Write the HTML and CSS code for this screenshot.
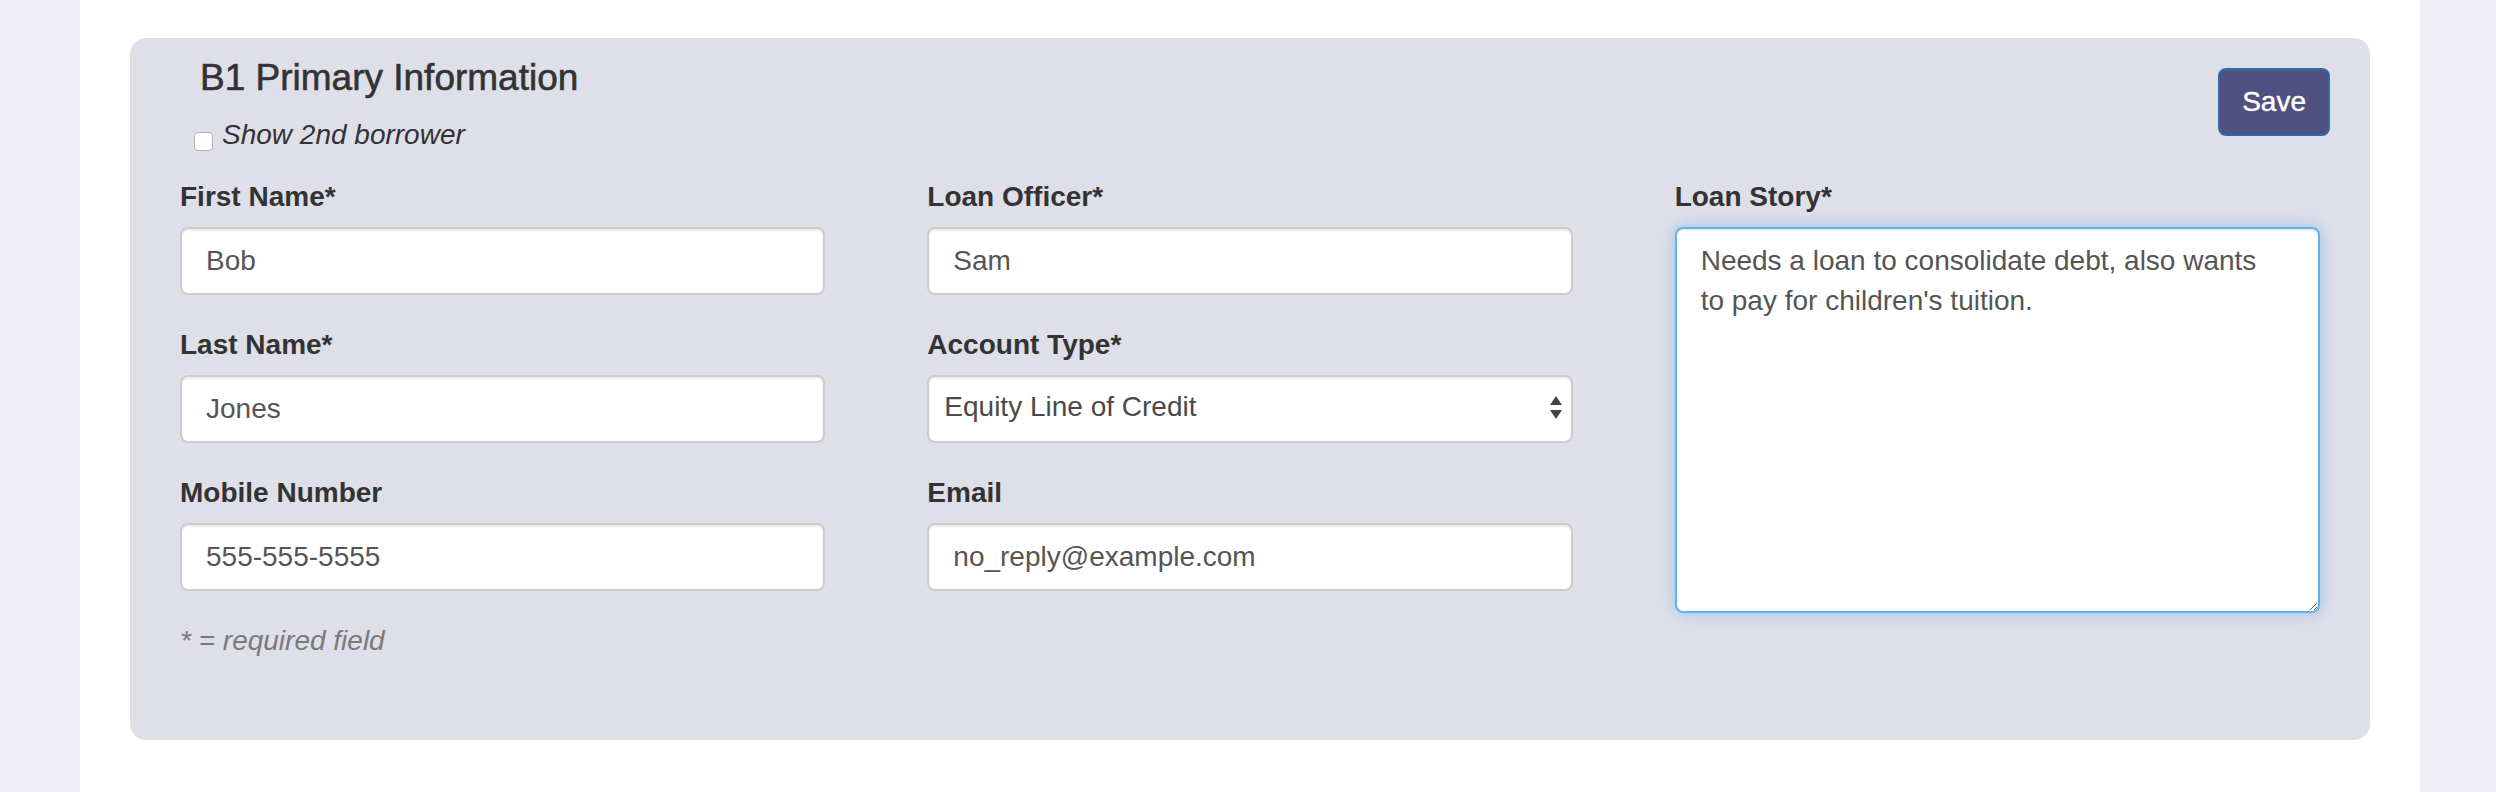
FILE: index.html
```html
<!DOCTYPE html>
<html lang="en">
<head>
<meta charset="utf-8">
<title>B1 Primary Information</title>
<link rel="stylesheet" href="styles.css">
</head>
<body>
<div class="page">
  <section class="card">
    <div class="card-header">
      <div class="heading">
        <h3 class="title">B1 Primary Information</h3>
        <label class="check-row">
          <input type="checkbox" class="check">
          <span class="check-label">Show 2nd borrower</span>
        </label>
      </div>
      <button class="btn-save" type="button">Save</button>
    </div>
    <div class="form-grid">
      <div class="col">
        <div class="group">
          <label class="field-label">First Name*</label>
          <input class="field" type="text" value="Bob">
        </div>
        <div class="group">
          <label class="field-label">Last Name*</label>
          <input class="field" type="text" value="Jones">
        </div>
        <div class="group">
          <label class="field-label">Mobile Number</label>
          <input class="field" type="text" value="555-555-5555">
        </div>
        <p class="note">* = required field</p>
      </div>
      <div class="col">
        <div class="group">
          <label class="field-label">Loan Officer*</label>
          <input class="field" type="text" value="Sam">
        </div>
        <div class="group">
          <label class="field-label">Account Type*</label>
          <div class="select-wrap">
            <select class="field select">
              <option>Equity Line of Credit</option>
            </select>
            <svg class="select-arrows" width="14" height="24" viewBox="0 0 14 24" aria-hidden="true">
              <path d="M7 0 L13 9 L1 9 Z" fill="#444"/>
              <path d="M1 14 L13 14 L7 23 Z" fill="#444"/>
            </svg>
          </div>
        </div>
        <div class="group">
          <label class="field-label">Email</label>
          <input class="field" type="text" value="no_reply@example.com">
        </div>
      </div>
      <div class="col">
        <div class="group">
          <label class="field-label">Loan Story*</label>
          <textarea class="field story">Needs a loan to consolidate debt, also wants
to pay for children's tuition.</textarea>
        </div>
      </div>
    </div>
  </section>
</div>
</body>
</html>
```

FILE: styles.css
```css
html, body {
  margin: 0;
  padding: 0;
}

body {
  background: #efeff5;
  font-family: "Liberation Sans", Arial, Helvetica, sans-serif;
  color: #333;
}

.page {
  margin: 0 76px 0 80px;
  background: #ffffff;
  min-height: 792px;
  padding: 38px 50px 0;
  box-sizing: border-box;
}

.card {
  background: #dfdfe9;
  border-radius: 16px;
  padding: 20px 0 79px;
}

.card-header {
  display: flex;
  justify-content: space-between;
  align-items: flex-start;
  padding: 0 40px 0 64px;
}

.heading {
  display: flex;
  flex-direction: column;
}

.title {
  margin: 0 0 0 6px;
  font-size: 37px;
  font-weight: 400;
  line-height: 40px;
  color: #333;
  -webkit-text-stroke: 0.6px #333;
}

.check-row {
  display: flex;
  align-items: flex-start;
  margin-top: 17px;
  height: 40px;
}

.check {
  appearance: none;
  -webkit-appearance: none;
  width: 19px;
  height: 19px;
  margin: 17px 9px 0 0;
  border: 1px solid #b4b4b8;
  border-radius: 4px;
  background: #ffffff;
  box-sizing: border-box;
}

.check-label {
  font-size: 28px;
  font-style: italic;
  line-height: 40px;
  color: #333;
}

.btn-save {
  margin-top: 10px;
  height: 68px;
  padding: 0 22px;
  background: #4f5180;
  border: 2px solid #2e6da4;
  border-radius: 8px;
  color: #ffffff;
  font-family: "Liberation Sans", Arial, sans-serif;
  font-size: 28px;
  line-height: 40px;
  -webkit-text-stroke: 0.4px #ffffff;
}

.form-grid {
  display: grid;
  grid-template-columns: repeat(3, 1fr);
  column-gap: 102px;
  padding: 0 50px;
  margin-top: 22px;
}

.col {
  display: flex;
  flex-direction: column;
  min-width: 0;
}

.group {
  display: flex;
  flex-direction: column;
  margin-bottom: 30px;
}

.field-label {
  font-size: 28px;
  font-weight: 700;
  line-height: 40px;
  margin-bottom: 10px;
  color: #333;
}

.field {
  display: block;
  width: 100%;
  height: 68px;
  box-sizing: border-box;
  padding: 12px 24px;
  border: 2px solid #cccccc;
  border-radius: 8px;
  background: #ffffff;
  box-shadow: inset 0 2px 2px rgba(0, 0, 0, 0.075);
  font-family: "Liberation Sans", Arial, sans-serif;
  font-size: 28px;
  line-height: 40px;
  color: #555;
  margin: 0;
  outline: none;
}

.select-wrap {
  position: relative;
}

.select {
  appearance: none;
  -webkit-appearance: none;
  padding: 10px 40px 14px 15px;
  color: #4a4a4a;
}

.select-arrows {
  position: absolute;
  right: 10px;
  top: 21px;
  pointer-events: none;
}

.story {
  height: 386px;
  border-color: #66afe9;
  box-shadow: inset 0 2px 2px rgba(0, 0, 0, 0.075), 0 0 16px rgba(102, 175, 233, 0.6);
  resize: both;
  white-space: pre-wrap;
}

.note {
  margin: 0;
  font-size: 28px;
  font-style: italic;
  line-height: 40px;
  color: #7a7a7a;
}
```
